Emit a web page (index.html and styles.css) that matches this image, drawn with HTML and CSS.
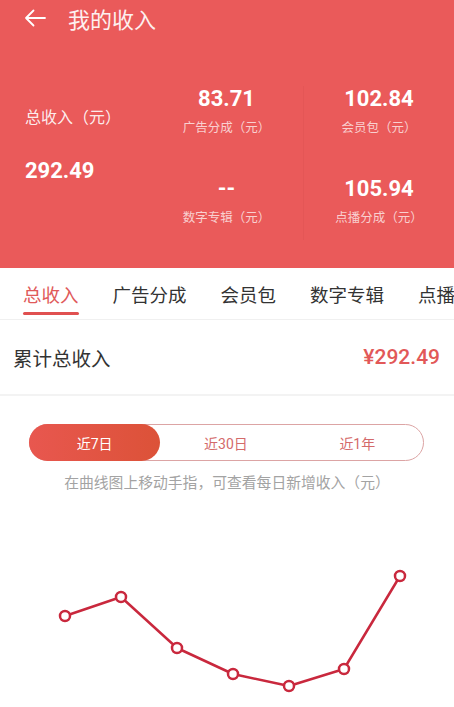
FILE: index.html
```html
<!DOCTYPE html>
<html lang="zh-CN">
<head>
    <meta charset="UTF-8">
    <meta name="viewport" content="width=device-width, initial-scale=1.0">
    <title>我的收入</title>
    <link rel="stylesheet" href="styles.css">
</head>
<body>
    <div class="header">
        <div class="topbar">
            <svg class="back" width="22" height="18" viewBox="0 0 22 18">
                <path d="M21 9H2M9.5 1.5L2 9l7.5 7.5" fill="none" stroke="#fff" stroke-width="1.8" stroke-linecap="round" stroke-linejoin="round"/>
            </svg>
            <span class="title">我的收入</span>
        </div>
        <div class="summary">
            <div class="total">
                <div class="total-label">总收入（元）</div>
                <div class="total-value">292.49</div>
            </div>
            <div class="stat">
                <div class="stat-value">83.71</div>
                <div class="stat-label">广告分成（元）</div>
            </div>
            <div class="stat split">
                <div class="stat-value">102.84</div>
                <div class="stat-label">会员包（元）</div>
            </div>
            <div class="stat second">
                <div class="stat-value">--</div>
                <div class="stat-label">数字专辑（元）</div>
            </div>
            <div class="stat second split">
                <div class="stat-value">105.94</div>
                <div class="stat-label">点播分成（元）</div>
            </div>
        </div>
    </div>

    <div class="tabs">
        <div class="tab active">总收入</div>
        <div class="tab">广告分成</div>
        <div class="tab">会员包</div>
        <div class="tab">数字专辑</div>
        <div class="tab">点播</div>
    </div>

    <div class="sum-row">
        <span class="sum-label">累计总收入</span>
        <span class="sum-value">¥292.49</span>
    </div>

    <div class="range">
        <div class="seg active">近7日</div>
        <div class="seg">近30日</div>
        <div class="seg">近1年</div>
    </div>
    <p class="hint">在曲线图上移动手指，可查看每日新增收入（元）</p>

    <svg class="chart" width="454" height="200" viewBox="0 0 454 200">
        <polyline points="65,108 121,89 177,140 233,166 289,178 344,161 400,68" fill="none" stroke="#c9283d" stroke-width="2.5" stroke-linejoin="round"/>
        <g fill="#fff" stroke="#c9283d" stroke-width="2.5">
            <circle cx="65" cy="108" r="5"/>
            <circle cx="121" cy="89" r="5"/>
            <circle cx="177" cy="140" r="5"/>
            <circle cx="233" cy="166" r="5"/>
            <circle cx="289" cy="178" r="5"/>
            <circle cx="344" cy="161" r="5"/>
            <circle cx="400" cy="68" r="5"/>
        </g>
    </svg>
</body>
</html>
```

FILE: styles.css
```css
body {
    margin: 0;
    width: 454px;
    overflow: hidden;
    background: #fff;
    font-family: Roboto, "Noto Sans CJK SC", sans-serif;
}
.header {
    background-color: #ea5a5a; /* main red */
    height: 268px;
    color: #fff;
}
.topbar {
    height: 36px;
    display: flex;
    align-items: center;
    padding-left: 24px;
}
.back {
    margin-right: 22px;
}
.title {
    font-size: 22px;
    color: #fdf0f0;
}
.summary {
    display: grid;
    grid-template-columns: 150px 153px 151px;
    grid-template-rows: 90px 64px;
    padding-top: 50px;
}
.total {
    grid-row: 1 / 3;
    padding-left: 25px;
}
.total-label {
    margin-top: 21px;
    font-size: 16px;
    line-height: 22px;
    color: rgba(255, 255, 255, 0.9);
}
.total-value {
    margin-top: 29px;
    font-size: 22px;
    line-height: 26px;
    font-weight: bold;
}
.stat {
    display: flex;
    flex-direction: column;
    align-items: center;
}
.stat.second {
    grid-column: 2;
}
.stat.second.split {
    grid-column: 3;
}
.split {
    border-left: 1px solid rgba(150, 40, 40, 0.07);
}
.stat-value {
    font-size: 22px;
    line-height: 26px;
    font-weight: bold;
}
.stat-label {
    margin-top: 8px;
    font-size: 12.5px;
    line-height: 16px;
    color: rgba(255, 255, 255, 0.72);
}
.tabs {
    display: flex;
    gap: 34px;
    height: 51px;
    padding-left: 23px;
    border-bottom: 1px solid #f0f0f0;
    white-space: nowrap;
}
.tab {
    padding-top: 16px;
    font-size: 18.5px;
    line-height: 24px;
    color: #333;
}
.tab.active {
    color: #e05a5a;
}
.tab.active::after {
    content: "";
    display: block;
    height: 3px;
    margin-top: 4px;
    border-radius: 2px;
    background: #e05050;
}
.sum-row {
    display: flex;
    justify-content: space-between;
    align-items: center;
    height: 74px;
    padding: 0 14px 0 13px;
    border-bottom: 2px solid #f3f3f3;
}
.sum-label {
    font-size: 19.5px;
    color: #333;
}
.sum-value {
    font-size: 21px;
    font-weight: 500;
    color: #e25858;
}
.range {
    display: flex;
    margin: 28px 30px 0 29px;
    height: 35px;
    border: 1px solid #dca4a4;
    border-radius: 19px;
}
.seg {
    flex: 1;
    display: flex;
    justify-content: center;
    align-items: center;
    font-size: 14px;
    color: #d46a6a;
}
.seg.active {
    margin: -1px 0 -1px -1px;
    border-radius: 19px;
    color: #fff;
    background: linear-gradient(90deg, #e8574f, #dc5238);
}
.hint {
    margin: 12px 0 0;
    text-align: center;
    font-size: 14.8px;
    line-height: 20px;
    color: #a3a3a3;
}
.chart {
    display: block;
    margin-top: 15px;
}
```
